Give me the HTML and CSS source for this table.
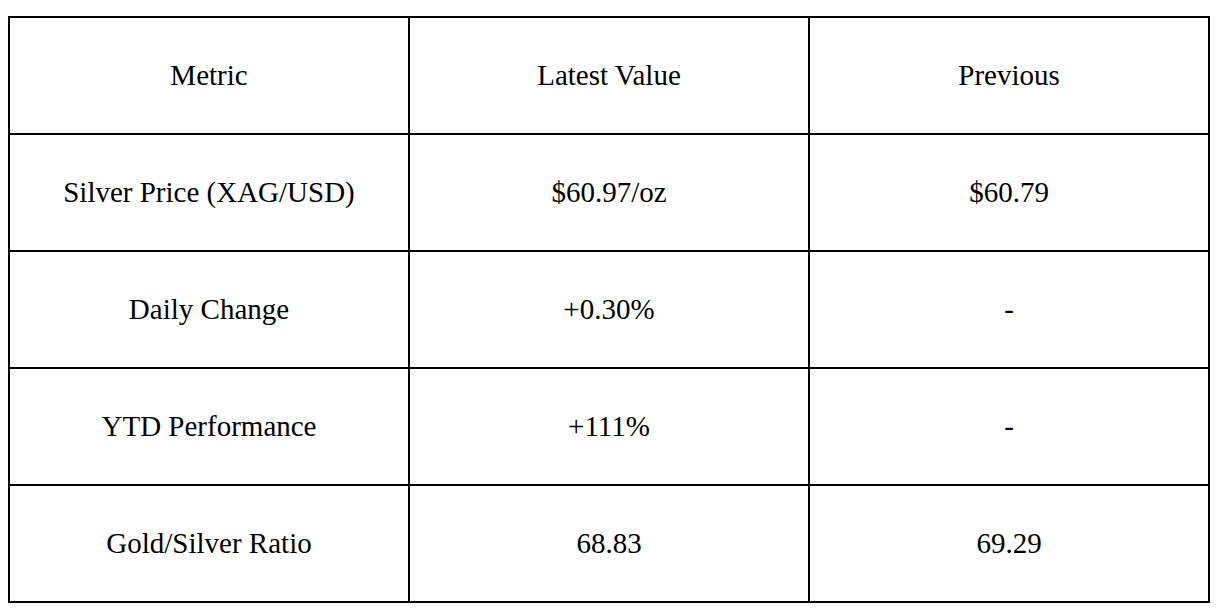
FILE: index.html
```html
<!DOCTYPE html>
<html>
<head>
<meta charset="utf-8">
<link rel="stylesheet" href="styles.css">
</head>
<body>
<div class="wrap">
<table class="data">
<colgroup><col class="c"><col class="c"><col class="c"></colgroup>
<tr><td>Metric</td><td>Latest Value</td><td>Previous</td></tr>
<tr><td>Silver Price (XAG/USD)</td><td>$60.97/oz</td><td>$60.79</td></tr>
<tr><td>Daily Change</td><td>+0.30%</td><td>-</td></tr>
<tr><td>YTD Performance</td><td>+111%</td><td>-</td></tr>
<tr><td>Gold/Silver Ratio</td><td>68.83</td><td>69.29</td></tr>
</table>
</div>
</body>
</html>
```
FILE: styles.css
```css
html, body { margin: 0; padding: 0; background: #fff; }
.wrap { padding: 16px 8px 0 8px; }
.data {
  border-collapse: collapse;
  table-layout: fixed;
  width: 1200px;
  border: 2px solid #000;
  font-family: "Liberation Serif", "Times New Roman", serif;
  font-size: 29px;
  color: #000;
}
.data .c { width: 400px; }
.data tr { height: 117px; }
.data td {
  border: 2px solid #000;
  text-align: center;
  vertical-align: middle;
  padding: 0;
}
```
